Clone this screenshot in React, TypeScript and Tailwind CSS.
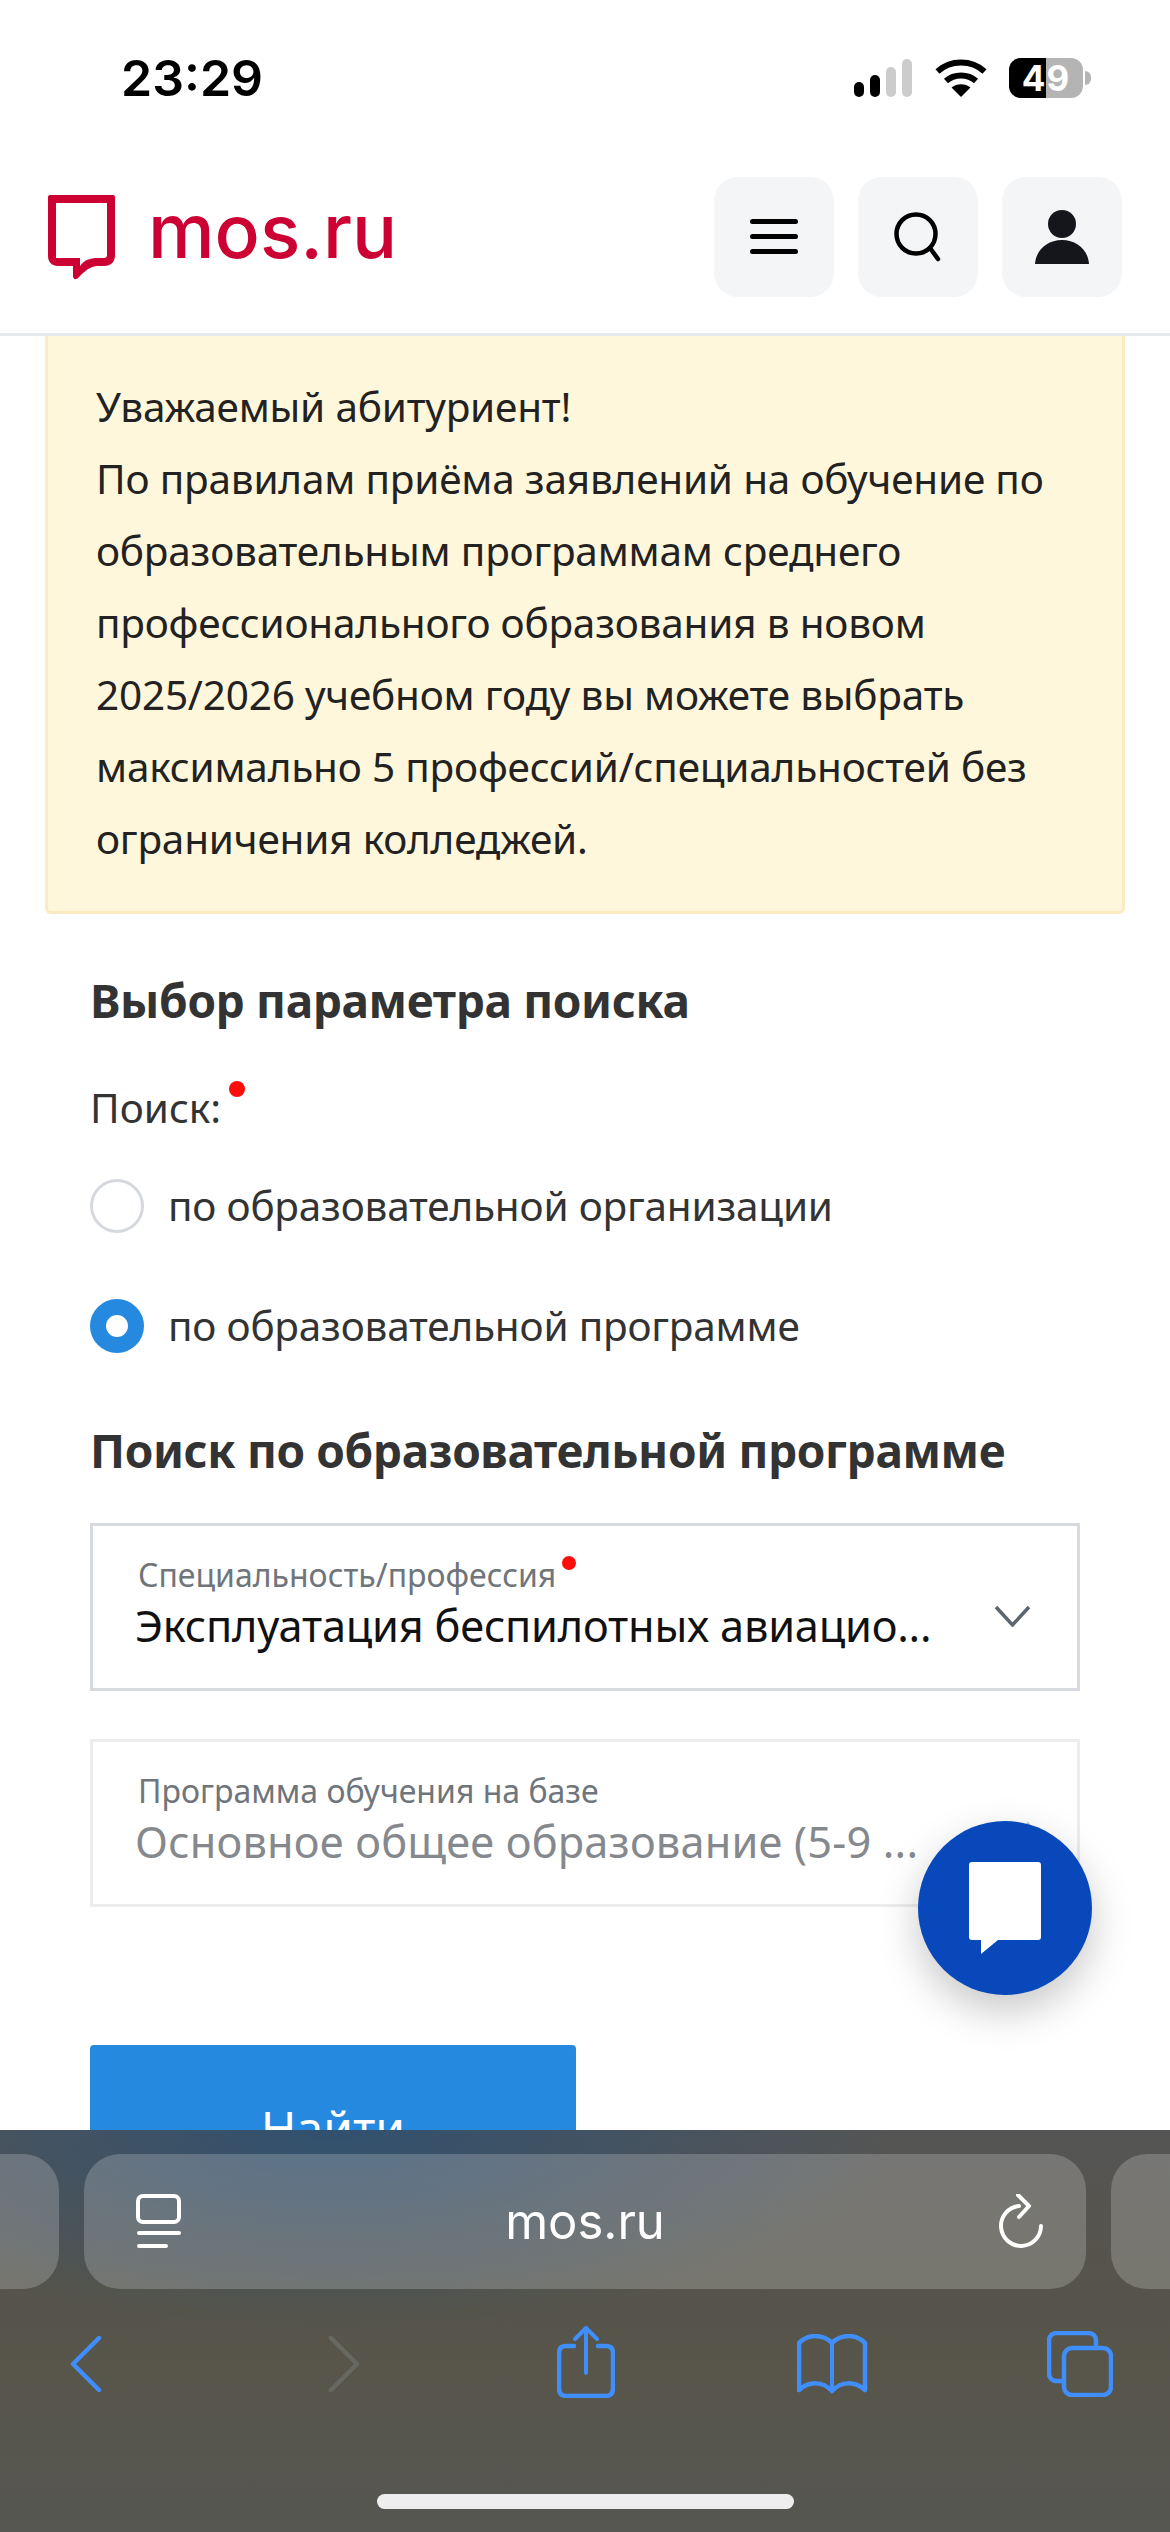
import React from "react";

const body = "font-['Noto_Sans',sans-serif]";

const Logo = () => (
  <svg width="68" height="86" viewBox="0 0 68 86" className="shrink-0">
    <path
      d="M2 0H65Q67 0 67 2V60C67 67 63 71 56 71H50C42 71 37 76 31 82C29 85 25 85 25 81V71H10C4 71 0 67 0 61V2Q0 0 2 0Z"
      fill="#cc0033"
    />
    <path d="M8 8H59V60Q59 63 56 63H50C42 63 36 65 32 71V63H8Z" fill="#fff" />
  </svg>
);

const RedDot = ({ className }: { className: string }) => (
  <span className={`absolute rounded-full bg-[#ff0d0d] ${className}`} />
);

const Radio = ({ checked, label }: { checked?: boolean; label: string }) => (
  <div className="flex items-center h-[54px] gap-[24px]">
    {checked ? (
      <span className="w-[54px] h-[54px] rounded-full border-[16px] border-[#2589e0] bg-white" />
    ) : (
      <span className="w-[54px] h-[54px] rounded-full border-[3px] border-[#d5d9de] bg-white" />
    )}
    <span className={`text-[40.5px] leading-[54px] text-[#333] tracking-[-0.2px] ${body}`}>{label}</span>
  </div>
);

const Chevron = ({ color }: { color: string }) => (
  <svg width="37" height="22" viewBox="0 0 37 22" fill="none" className="absolute left-[901px] top-[79px]">
    <path d="M2 2L18.5 20L35 2" stroke={color} strokeWidth="3.5" />
  </svg>
);

const App: React.FC = () => {
  return (
    <div className="relative w-[1170px] h-[2532px] overflow-hidden bg-white flex flex-col">
      {/* status bar */}
      <div className="h-[156px] shrink-0 flex items-center justify-between pl-[121px] pr-[79px]">
        <span className="font-['Inter',sans-serif] font-semibold text-[50px] leading-none text-black">23:29</span>
        <div className="flex items-center">
          <svg width="60" height="38" viewBox="0 0 60 38" className="mr-[21px]">
            <rect x="0" y="23" width="10" height="15" rx="5" fill="#000" />
            <rect x="16" y="16" width="10" height="22" rx="5" fill="#000" />
            <rect x="32" y="8" width="10" height="30" rx="5" fill="#ccc" />
            <rect x="48" y="0" width="10" height="38" rx="5" fill="#ccc" />
          </svg>
          <svg width="52" height="38" viewBox="0 0 52 38" fill="none" className="mr-[22px]">
            <path d="M2.5 12.5C15.5 0.5 36.5 0.5 49.5 12.5" stroke="#000" strokeWidth="6" strokeLinejoin="round" />
            <path d="M11 22C19 14.5 33 14.5 41 22" stroke="#000" strokeWidth="6" />
            <path d="M26 38L16.5 28.5C21.5 24 30.5 24 35.5 28.5Z" fill="#000" />
          </svg>
          <div className="relative w-[74px] h-[40px] rounded-[12px] overflow-hidden bg-[#b4b4b4] font-['Inter',sans-serif] font-bold text-[35px] text-white">
            <div className="absolute left-0 top-0 w-[37px] h-full bg-black" />
            <div className="absolute inset-0 flex items-center justify-center leading-none tracking-[1px]">49</div>
          </div>
          <div className="w-[6px] h-[14px] ml-[2px] rounded-r-full bg-[#b4b4b4]" />
        </div>
      </div>

      {/* site header */}
      <header className="h-[180px] shrink-0 border-b-[3px] border-[#e7eaec] pt-[21px] pl-[48px] pr-[48px] flex justify-between items-start">
        <div className="flex items-start pt-[18px] gap-[32px]">
          <Logo />
          <span className="font-['Inter',sans-serif] font-medium text-[75px] leading-[72px] text-[#cc0033]">
            mos.ru
          </span>
        </div>
        <div className="flex gap-[24px]">
          <button className="w-[120px] h-[120px] rounded-[24px] bg-[#f4f5f7] flex items-center justify-center">
            <svg width="48" height="36" viewBox="0 0 48 36">
              <rect y="0" width="48" height="5" rx="2.5" fill="#000" />
              <rect y="15" width="48" height="5" rx="2.5" fill="#000" />
              <rect y="30" width="48" height="5" rx="2.5" fill="#000" />
            </svg>
          </button>
          <button className="w-[120px] h-[120px] rounded-[24px] bg-[#f4f5f7] flex items-center justify-center">
            <svg width="48" height="50" viewBox="0 0 48 50" fill="none">
              <circle cx="22" cy="22" r="19.5" stroke="#000" strokeWidth="4.5" />
              <path d="M36 36L44 47" stroke="#000" strokeWidth="4.5" strokeLinecap="round" />
            </svg>
          </button>
          <button className="w-[120px] h-[120px] rounded-[24px] bg-[#f4f5f7] flex items-center justify-center">
            <svg width="54" height="54" viewBox="0 0 54 54">
              <circle cx="27" cy="14" r="14" fill="#14161c" />
              <path d="M0 54C1 40 12 30 27 30C42 30 53 40 54 54Z" fill="#14161c" />
            </svg>
          </button>
        </div>
      </header>

      {/* page */}
      <main className="flex-1 min-h-0 overflow-hidden">
        <div className={`mx-[45px] border-x-[3px] border-b-[3px] border-[#faecc0] rounded-b-[6px] bg-[#fff7db] pl-[48px] pr-[30px] pt-[35px] pb-[36px] text-[40.5px] leading-[72px] text-[#222] tracking-[-0.2px] ${body}`}>
          <p>Уважаемый абитуриент!</p>
          <p>По правилам приёма заявлений на обучение по образовательным программам среднего профессионального образования в новом 2025/2026 учебном году вы можете выбрать максимально 5 профессий/специальностей без ограничения колледжей.</p>
        </div>

        <div className={`px-[90px] ${body}`}>
          <h2 className="mt-[56px] text-[46px] leading-[60px] font-bold text-[#333] tracking-[-0.35px]">Выбор параметра поиска</h2>

          <div className="relative mt-[48px] w-fit text-[40.5px] leading-[60px] text-[#333]">
            Поиск:
            <RedDot className="right-[-24px] top-[3px] w-[16px] h-[16px]" />
          </div>

          <div className="mt-[41px] flex flex-col gap-[66px]">
            <Radio label="по образовательной организации" />
            <Radio checked label="по образовательной программе" />
          </div>

          <h2 className="mt-[66px] text-[46px] leading-[62px] font-bold text-[#333] tracking-[-0.35px]">Поиск по образовательной программе</h2>

          <div className="relative mt-[42px] h-[168px] border-[3px] border-[#d6dade] pl-[45px]">
            <div className="pt-[29px] relative w-fit text-[32px] leading-[40px] text-[#6f757b]">
              Специальность/профессия
              <RedDot className="right-[-20px] top-[30px] w-[14px] h-[14px]" />
            </div>
            <div className="mt-[3px] text-[43.3px] leading-[56px] text-[#111] -ml-[3px] tracking-[-0.2px]">Эксплуатация беспилотных авиацио...</div>
            <Chevron color="#5c6670" />
          </div>

          <div className="relative mt-[48px] h-[168px] border-[3px] border-[#ebedef] pl-[45px]">
            <div className="pt-[29px] text-[32px] leading-[40px] text-[#6f757b]">Программа обучения на базе</div>
            <div className="mt-[3px] text-[43.3px] leading-[56px] text-[#85898d] -ml-[3px] tracking-[0.2px]">Основное общее образование (5-9 ...</div>
            <Chevron color="#c4c8cc" />
          </div>

          <button className="mt-[138px] w-[486px] h-[166px] rounded-[4px] bg-[#2589e0] text-white text-[48px] leading-none">Найти</button>
        </div>
      </main>

      {/* chat button */}
      <div className="absolute left-[918px] top-[1821px] w-[174px] h-[174px] rounded-full bg-[#0848bb] shadow-[0_16px_40px_rgba(0,0,0,0.22)] flex items-center justify-center">
        <svg width="72" height="92" viewBox="0 0 72 92">
          <path d="M3 0H69C71 0 72 1 72 3V75C72 77 71 78 69 78H29L12 92V78H3C1 78 0 77 0 75V3C0 1 1 0 3 0Z" fill="#fff" />
        </svg>
      </div>

      {/* safari toolbar */}
      <div className="relative h-[402px] shrink-0 overflow-hidden bg-[#565651] bg-[radial-gradient(ellipse_560px_200px_at_330px_0px,rgba(30,78,125,0.65),transparent),linear-gradient(180deg,#555,#56544a_40%,#58564b_60%,#565652)] flex flex-col">
        <div className="mt-[24px] h-[135px] shrink-0 flex gap-[25px] -mx-[60px] justify-center">
          <div className="w-[119px] h-full shrink-0 rounded-[36px] bg-[#fff]/20" />
          <div className="w-[1002px] h-full shrink-0 rounded-[36px] bg-[#fff]/20 flex items-center justify-between pl-[52px] pr-[42px]">
            <svg width="46" height="56" viewBox="0 0 46 56" fill="none">
              <rect x="2" y="2" width="41" height="26" rx="5" stroke="#fff" strokeWidth="4" />
              <rect x="1" y="37" width="44" height="4" rx="2" fill="#fff" />
              <rect x="1" y="50" width="31" height="4" rx="2" fill="#fff" />
            </svg>
            <span className="-ml-[10px] font-['Inter',sans-serif] text-[49px] leading-none text-white">mos.ru</span>
            <svg width="46" height="56" viewBox="0 0 46 56" fill="none">
              <path d="M21 12A20 20 0 1 0 43 32" stroke="#fff" strokeWidth="4" strokeLinecap="round" />
              <path d="M20 1L31 12L21 23" stroke="#fff" strokeWidth="4" strokeLinecap="round" strokeLinejoin="round" />
            </svg>
          </div>
          <div className="w-[119px] h-full shrink-0 rounded-[36px] bg-[#fff]/20" />
        </div>

        <div className="mt-[40px] h-[70px] flex items-center pl-[70px]">
          <svg width="32" height="56" viewBox="0 0 32 56" fill="none">
            <path d="M29 2L3 28L29 54" stroke="#3f8efc" strokeWidth="4.5" strokeLinecap="round" strokeLinejoin="round" />
          </svg>
          <svg width="32" height="56" viewBox="0 0 32 56" fill="none" className="ml-[226px]">
            <path d="M3 2L29 28L3 54" stroke="#686862" strokeWidth="4.5" strokeLinecap="round" strokeLinejoin="round" />
          </svg>
          <svg width="58" height="72" viewBox="0 0 58 72" fill="none" className="ml-[197px] -mt-[4px]">
            <path d="M17 20H9C4 20 2 23 2 27V62C2 67 4 70 9 70H49C54 70 56 67 56 62V27C56 23 54 20 49 20H41" stroke="#3f8efc" strokeWidth="4.5" strokeLinecap="round" />
            <path d="M29 47V3M18 13L29 2L40 13" stroke="#3f8efc" strokeWidth="4" strokeLinecap="round" strokeLinejoin="round" />
          </svg>
          <svg width="72" height="60" viewBox="0 0 72 60" fill="none" className="ml-[182px]">
            <path
              d="M35 9C30 4 24 2 18 2C11 2 6 5 2 9V56C12 47 26 47 35 57C44 47 58 47 68 56V9C64 5 59 2 52 2C46 2 40 4 35 9Z"
              stroke="#3f8efc"
              strokeWidth="4.5"
              strokeLinejoin="round"
            />
            <path d="M35 9V57" stroke="#3f8efc" strokeWidth="4" />
          </svg>
          <svg width="66" height="66" viewBox="0 0 66 66" fill="none" className="ml-[178px]">
            <path d="M49 15V10C49 5 46 2 41 2H10C5 2 2 5 2 10V42C2 47 5 50 10 50H15" stroke="#3f8efc" strokeWidth="4.5" />
            <rect x="17" y="17" width="47" height="47" rx="8" stroke="#3f8efc" strokeWidth="4.5" />
          </svg>
        </div>

        <div className="mt-[95px] mx-auto w-[417px] h-[15px] rounded-full bg-[#eeeeee]" />
      </div>
    </div>
  );
};

export default App;
